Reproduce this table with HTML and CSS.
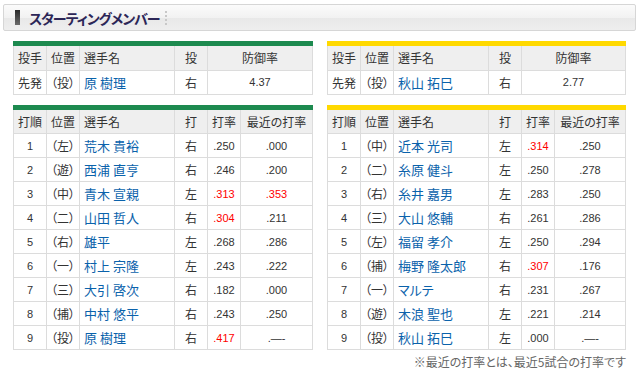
FILE: index.html
```html
<!DOCTYPE html>
<html lang="ja">
<head>
<meta charset="utf-8">
<link rel="stylesheet" href="styles.css">
</head>
<body>
<div class="title-bar">
  <span class="title-icon"></span>
  <h1 class="title">スターティングメンバー</h1>
  <span class="title-sep"></span>
</div>
<div class="teams">
  <div class="team">
    <div class="block green">
      <table class="tbl pitch">
        <colgroup><col class="c1"><col class="c2"><col class="c3"><col class="c4"><col class="c5w"></colgroup>
        <tr class="head"><th>投手</th><th>位置</th><th class="l">選手名</th><th>投</th><th>防御率</th></tr>
        <tr><td class="jp">先発</td><td class="jp">（投）</td><td class="name">原 樹理</td><td class="jp">右</td><td class="num">4.37</td></tr>
      </table>
    </div>
    <div class="block green">
      <table class="tbl">
        <colgroup><col class="c1"><col class="c2"><col class="c3"><col class="c4"><col class="c5"><col class="c6"></colgroup>
        <tr class="head"><th>打順</th><th>位置</th><th class="l">選手名</th><th>打</th><th>打率</th><th>最近の打率</th></tr>
        <tr><td class="num">1</td><td class="jp">（左）</td><td class="name">荒木 貴裕</td><td class="jp">右</td><td class="num">.250</td><td class="num">.000</td></tr>
        <tr><td class="num">2</td><td class="jp">（遊）</td><td class="name">西浦 直亨</td><td class="jp">右</td><td class="num">.246</td><td class="num">.200</td></tr>
        <tr><td class="num">3</td><td class="jp">（中）</td><td class="name">青木 宣親</td><td class="jp">左</td><td class="num red">.313</td><td class="num red">.353</td></tr>
        <tr><td class="num">4</td><td class="jp">（二）</td><td class="name">山田 哲人</td><td class="jp">右</td><td class="num red">.304</td><td class="num">.211</td></tr>
        <tr><td class="num">5</td><td class="jp">（右）</td><td class="name">雄平</td><td class="jp">左</td><td class="num">.268</td><td class="num">.286</td></tr>
        <tr><td class="num">6</td><td class="jp">（一）</td><td class="name">村上 宗隆</td><td class="jp">左</td><td class="num">.243</td><td class="num">.222</td></tr>
        <tr><td class="num">7</td><td class="jp">（三）</td><td class="name">大引 啓次</td><td class="jp">右</td><td class="num">.182</td><td class="num">.000</td></tr>
        <tr><td class="num">8</td><td class="jp">（捕）</td><td class="name">中村 悠平</td><td class="jp">右</td><td class="num">.243</td><td class="num">.250</td></tr>
        <tr><td class="num">9</td><td class="jp">（投）</td><td class="name">原 樹理</td><td class="jp">右</td><td class="num red">.417</td><td class="num">.—-</td></tr>
      </table>
    </div>
  </div>
  <div class="team">
    <div class="block yellow">
      <table class="tbl pitch">
        <colgroup><col class="c1"><col class="c2"><col class="c3"><col class="c4"><col class="c5w"></colgroup>
        <tr class="head"><th>投手</th><th>位置</th><th class="l">選手名</th><th>投</th><th>防御率</th></tr>
        <tr><td class="jp">先発</td><td class="jp">（投）</td><td class="name">秋山 拓巳</td><td class="jp">右</td><td class="num">2.77</td></tr>
      </table>
    </div>
    <div class="block yellow">
      <table class="tbl">
        <colgroup><col class="c1"><col class="c2"><col class="c3"><col class="c4"><col class="c5"><col class="c6"></colgroup>
        <tr class="head"><th>打順</th><th>位置</th><th class="l">選手名</th><th>打</th><th>打率</th><th>最近の打率</th></tr>
        <tr><td class="num">1</td><td class="jp">（中）</td><td class="name">近本 光司</td><td class="jp">左</td><td class="num red">.314</td><td class="num">.250</td></tr>
        <tr><td class="num">2</td><td class="jp">（二）</td><td class="name">糸原 健斗</td><td class="jp">左</td><td class="num">.250</td><td class="num">.278</td></tr>
        <tr><td class="num">3</td><td class="jp">（右）</td><td class="name">糸井 嘉男</td><td class="jp">左</td><td class="num">.283</td><td class="num">.250</td></tr>
        <tr><td class="num">4</td><td class="jp">（三）</td><td class="name">大山 悠輔</td><td class="jp">右</td><td class="num">.261</td><td class="num">.286</td></tr>
        <tr><td class="num">5</td><td class="jp">（左）</td><td class="name">福留 孝介</td><td class="jp">左</td><td class="num">.250</td><td class="num">.294</td></tr>
        <tr><td class="num">6</td><td class="jp">（捕）</td><td class="name">梅野 隆太郎</td><td class="jp">右</td><td class="num red">.307</td><td class="num">.176</td></tr>
        <tr><td class="num">7</td><td class="jp">（一）</td><td class="name">マルテ</td><td class="jp">右</td><td class="num">.231</td><td class="num">.267</td></tr>
        <tr><td class="num">8</td><td class="jp">（遊）</td><td class="name">木浪 聖也</td><td class="jp">左</td><td class="num">.221</td><td class="num">.214</td></tr>
        <tr><td class="num">9</td><td class="jp">（投）</td><td class="name">秋山 拓巳</td><td class="jp">左</td><td class="num">.000</td><td class="num">.—-</td></tr>
      </table>
    </div>
    <p class="note">※最近の打率とは、最近5試合の打率です</p>
  </div>
</div>
</body>
</html>
```
FILE: styles.css
```css
* { box-sizing: border-box; }
html, body { margin: 0; padding: 0; background: #fff; }
body {
  font-family: "Liberation Sans", "Noto Sans CJK JP", sans-serif;
  font-feature-settings: "palt";
  color: #333;
  width: 644px;
}
.title-bar {
  margin: 4px 8px 0 3px;
  height: 27px;
  border: 1px solid #d6d6d6;
  border-radius: 2px;
  background: linear-gradient(#fbfbfb 0%, #f2f2f2 50%, #e8e8e8 52%, #eeeeee 100%);
  display: flex;
  align-items: center;
  padding-left: 11px;
}
.title-icon {
  width: 5px;
  height: 15px;
  background: linear-gradient(#2a2a2a, #6a6a6a);
}
.title {
  margin: 0 0 0 9px;
  font-size: 14px;
  font-weight: bold;
  letter-spacing: -1px;
  color: #2c2657;
  font-family: "Noto Sans CJK JP", sans-serif;
  line-height: 1;
}
.title-sep {
  margin-left: 5px;
  height: 14px;
  border-left: 2px dotted #c8c8c8;
}
.teams {
  display: grid;
  grid-template-columns: 300px 299px;
  column-gap: 14px;
  padding-left: 13px;
  margin-top: 10px;
}
.block {
  border-top: 5px solid;
  margin-bottom: 10px;
}
.green { border-top-color: #1d8a4f; }
.yellow { border-top-color: #ffd900; }
.tbl {
  width: 100%;
  border-collapse: collapse;
  table-layout: fixed;
}
.tbl th, .tbl td {
  height: 24px;
  padding: 0;
  border: 1px solid #dcdcdc;
  border-top: none;
  text-align: center;
  vertical-align: middle;
  white-space: nowrap;
  overflow: hidden;
}
.tbl th {
  background: #efefef;
  font-weight: normal;
  font-size: 12px;
  font-family: "Noto Sans CJK JP", sans-serif;
  color: #333;
}
.tbl th.l { text-align: left; padding-left: 4px; }
.c1, .c2, .c4, .c5 { width: 33px; }
.c3 { width: 95px; }
.c6 { width: auto; }
.c5w { width: auto; }
.jp {
  font-size: 12px;
  font-family: "Noto Sans CJK JP", sans-serif;
}
.num { font-size: 11px; }
.red { color: #f00; }
.tbl td.name {
  text-align: left;
  padding-left: 4px;
  font-size: 13px;
  color: #0a62ab;
  font-family: "Noto Sans CJK JP", sans-serif;
}
.note {
  margin: -6px 0 0;
  text-align: right;
  font-size: 12px;
  color: #666;
  font-family: "Noto Sans CJK JP", sans-serif;
  line-height: 16px;
}
```
